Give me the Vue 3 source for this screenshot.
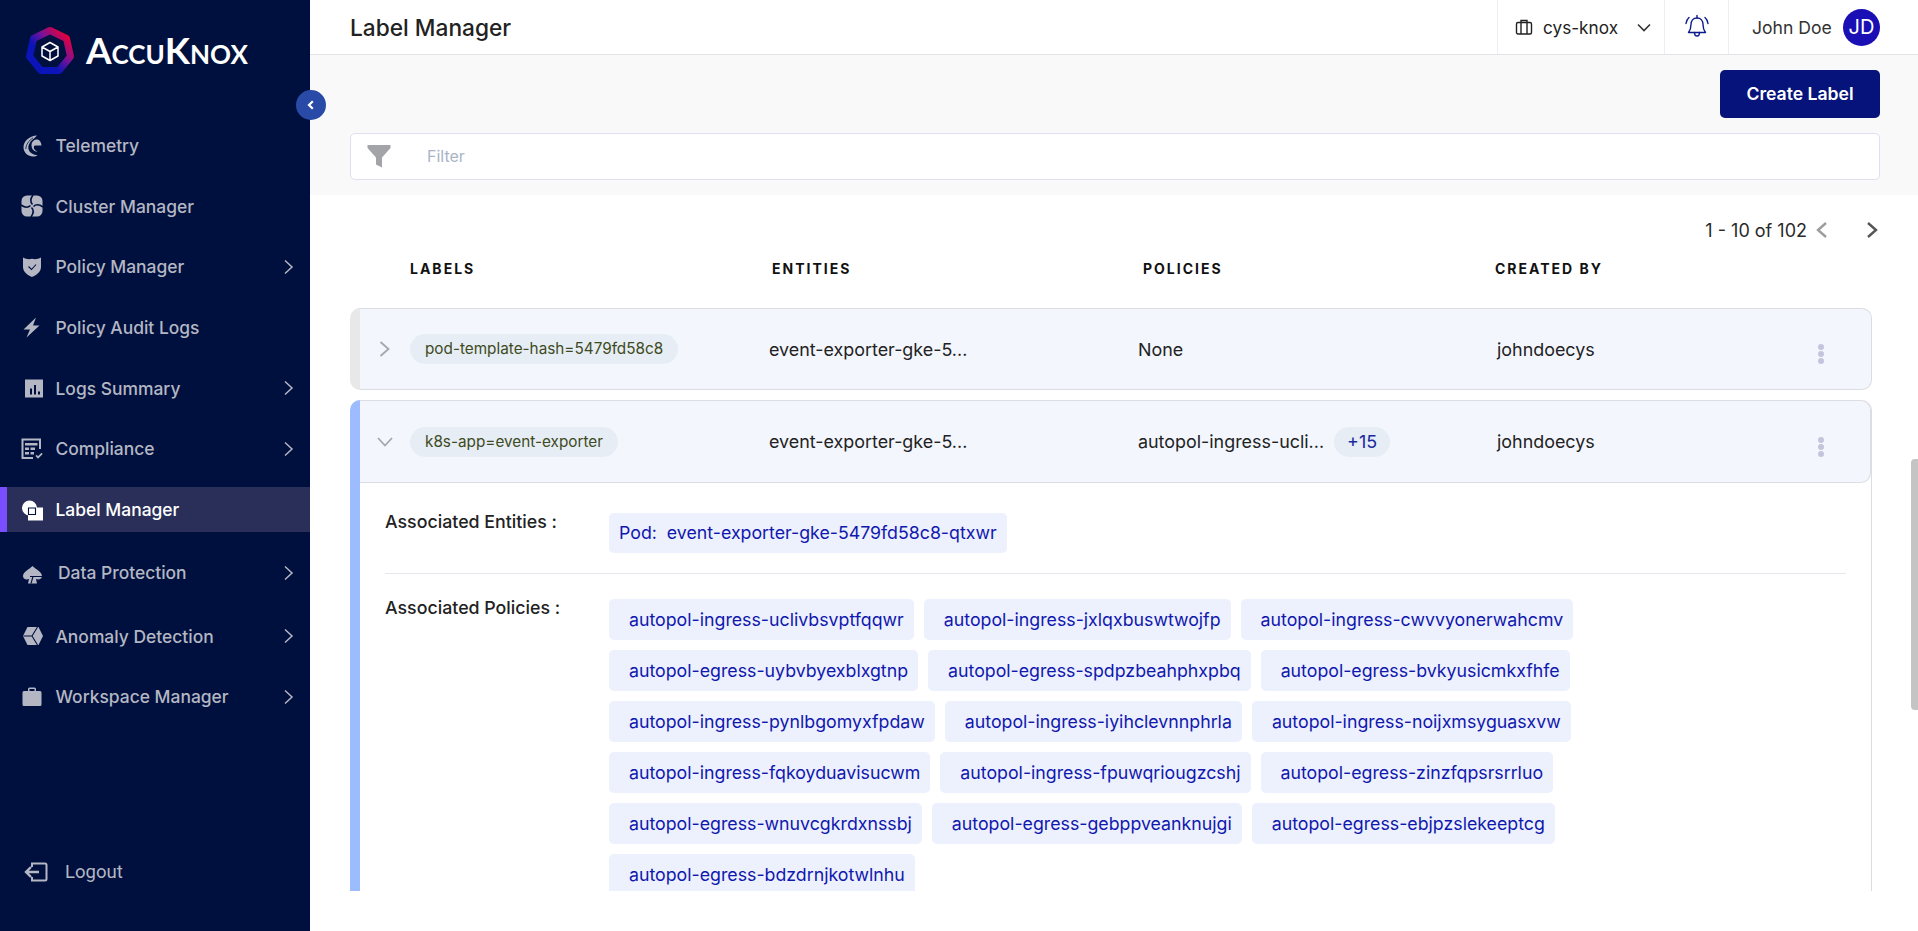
<template>
  <div class="app">
    <!-- Sidebar -->
    <aside class="sidebar">
      <div class="brand">
        <svg class="brand-mark" width="50" height="50" viewBox="0 0 50 50">
          <defs>
            <linearGradient id="ring" x1="0.1" y1="0.85" x2="0.9" y2="0.1">
              <stop offset="0.3" stop-color="#0a14b8" />
              <stop offset="0.62" stop-color="#7a1296" />
              <stop offset="1" stop-color="#e4003a" />
            </linearGradient>
          </defs>
          <path d="M25 4.500L41.500 12.500L45.500 30.500L34 44.500H16L4.500 30.500L8.500 12.500Z" fill="none" stroke="url(#ring)" stroke-width="7" stroke-linejoin="round" />
          <path d="M25 16.500L33 21V30L25 34.500L17 30V21Z M17 21L25 25.500L33 21 M25 25.500V34.500" fill="none" stroke="#fff" stroke-width="1.500" stroke-linejoin="round" />
        </svg>
        <span class="brand-name">AccuKnox</span>
      </div>
      <button class="collapse-btn">
        <svg width="12" height="12" viewBox="0 0 12 12"><path d="M7.800 2.200L4 6l3.800 3.800" fill="none" stroke="#fff" stroke-width="2.200" /></svg>
      </button>

      <nav class="nav">
        <div
          v-for="item in navItems"
          :key="item.label"
          class="nav-item"
          :class="{ active: item.active, wide: item.wide, shifted: item.shifted }"
        >
          <svg class="nav-icon" width="24" height="24" viewBox="0 0 24 24">
            <path v-for="d in icons[item.icon].fill" :key="d" :d="d" fill="currentColor" fill-rule="evenodd" />
            <path v-if="icons[item.icon].cut" :d="icons[item.icon].cut" fill="none" stroke="#00103e" :stroke-width="icons[item.icon].cutWidth || 1.1" />
          </svg>
          <span class="nav-label">{{ item.label }}</span>
          <svg v-if="item.arrow" class="nav-arrow" width="10" height="16" viewBox="0 0 10 16"><path d="M1 1.500l7 6.500-7 6.500" fill="none" stroke="currentColor" stroke-width="1.500" /></svg>
        </div>
      </nav>

      <div class="logout">
        <svg width="27" height="24" viewBox="0 0 27 24" fill="none" stroke="currentColor" stroke-width="2">
          <path d="M11 7V3.500h13a1.500 1.500 0 0 1 1.500 1.500v14a1.500 1.500 0 0 1-1.500 1.500H11V17" />
          <path d="M18 12H5M10 7l-5 5 5 5" stroke-width="2.400" />
        </svg>
        <span>Logout</span>
      </div>
    </aside>

    <!-- Main -->
    <main class="main">
      <header class="topbar">
        <h1 class="title">Label Manager</h1>
        <div class="top-actions">
          <div class="top-box workspace">
            <svg width="18" height="18" viewBox="0 0 18 18" fill="none" stroke="#222" stroke-width="1.400">
              <rect x="1.500" y="4.500" width="15" height="11.500" rx="1.500" />
              <path d="M6 16V2.500h6V16" />
            </svg>
            <span class="workspace-name">cys-knox</span>
            <svg width="14" height="9" viewBox="0 0 14 9"><path d="M1 1.500l6 6 6-6" fill="none" stroke="#333" stroke-width="1.600" /></svg>
          </div>
          <div class="top-box bell">
            <svg width="26" height="26" viewBox="0 0 26 26" fill="none" stroke="#0c1c8c" stroke-width="1.400" stroke-linecap="round" stroke-linejoin="round">
              <path d="M13 4c-4 0-6 3-6 6.500 0 4-1 6-2.500 8h17c-1.500-2-2.500-4-2.500-8C19 7 17 4 13 4z" />
              <path d="M10.500 18.500c0 2 1 3.500 2.500 3.500s2.500-1.500 2.500-3.500M13 1.500V4M5 3.500C3.300 5 2.300 7 2 9.500M21 3.500c1.700 1.500 2.700 3.500 3 6" />
            </svg>
          </div>
          <div class="top-box user">
            <span class="user-name">John Doe</span>
            <span class="avatar">JD</span>
          </div>
        </div>
      </header>

      <section class="toolbar">
        <button class="create-btn">Create Label</button>
        <div class="filter">
          <svg width="24" height="24" viewBox="0 0 24 24"><path d="M0.500 1H23.500V4L15 13.500V23.500L9 20.500V13.500L0.500 4Z" fill="#a3a4a7" /></svg>
          <span class="filter-text">Filter</span>
        </div>
      </section>

      <section class="list">
        <div class="pagination">
          <span>1 - 10 of 102</span>
          <svg width="12" height="18" viewBox="0 0 12 18"><path d="M10 2L2 9l8 7" fill="none" stroke="#9c9c9c" stroke-width="2.400" /></svg>
          <svg width="12" height="18" viewBox="0 0 12 18"><path d="M2 2l8 7-8 7" fill="none" stroke="#555" stroke-width="2.400" /></svg>
        </div>

        <div class="col-heads">
          <span class="h-label">LABELS</span>
          <span class="h-entity">ENTITIES</span>
          <span class="h-policy">POLICIES</span>
          <span>CREATED BY</span>
        </div>

        <div class="row closed">
          <svg class="chev" width="14" height="20" viewBox="0 0 14 20"><path d="M2.500 3l8 7-8 7" fill="none" stroke="#a4a7ae" stroke-width="1.800" /></svg>
          <div class="c-label"><span class="pill">pod-template-hash=5479fd58c8</span></div>
          <div class="c-entity">event-exporter-gke-5...</div>
          <div class="c-policy">None</div>
          <div class="c-owner">johndoecys</div>
          <div class="kebab"><i></i><i></i><i></i></div>
        </div>

        <div class="open-wrap">
          <div class="row opened">
            <svg class="chev" width="18" height="20" viewBox="0 0 18 20"><path d="M2 6l7 7.500L16 6" fill="none" stroke="#a4a7ae" stroke-width="1.800" /></svg>
            <div class="c-label"><span class="pill">k8s-app=event-exporter</span></div>
            <div class="c-entity">event-exporter-gke-5...</div>
            <div class="c-policy">
              <span>autopol-ingress-ucli...</span>
              <span class="more">+15</span>
            </div>
            <div class="c-owner">johndoecys</div>
            <div class="kebab"><i></i><i></i><i></i></div>
          </div>

          <div class="details">
            <div class="detail-row entities">
              <div class="detail-label">Associated Entities :</div>
              <div class="chips">
                <span class="chip entity">Pod:&nbsp; event-exporter-gke-5479fd58c8-qtxwr</span>
              </div>
            </div>
            <div class="detail-row policies">
              <div class="detail-label">Associated Policies :</div>
              <div class="chips">
                <span v-for="p in policies" :key="p" class="chip">{{ p }}</span>
              </div>
            </div>
          </div>
        </div>
      </section>
    </main>

    <div class="scroll-thumb"></div>
  </div>
</template>

<script setup>
const navItems = [
  { label: 'Telemetry', icon: 'telemetry' },
  { label: 'Cluster Manager', icon: 'cluster' },
  { label: 'Policy Manager', icon: 'shield', arrow: true },
  { label: 'Policy Audit Logs', icon: 'bolt' },
  { label: 'Logs Summary', icon: 'logs', arrow: true },
  { label: 'Compliance', icon: 'compliance', arrow: true },
  { label: 'Label Manager', icon: 'label', active: true, wide: true },
  { label: 'Data Protection', icon: 'spade', arrow: true, wide: true, shifted: true },
  { label: 'Anomaly Detection', icon: 'hex', arrow: true },
  { label: 'Workspace Manager', icon: 'case', arrow: true },
]

const icons = {
  telemetry: {
    fill: [
      'M17 1.500C10 2 3.500 6.500 3.500 13.500C3.500 18.500 8 22.500 13 22.500C15 22.500 16.500 22 17.500 21C14 21 9.500 19 8.500 15C7.800 11.500 10 7 14 4.500C15 3.800 16 2.500 17 1.500Z',
      'M11.500 11C11.500 7.500 14.500 5.500 17 5.500C19.500 5.500 21 8 21.500 11.500H15C14 11.500 13.500 13 14 14.500C14.800 16 16 17 17.500 17.500C14.500 18 11.500 15.500 11.500 11Z',
    ],
    cut: 'M5.800 15C6 10.500 9 6.500 13 3.800',
    cutWidth: 0.8,
  },
  cluster: {
    fill: ['M1.500 7A5.500 5.500 0 0 1 7 1.500H17A5.500 5.500 0 0 1 22.500 7V17A5.500 5.500 0 0 1 17 22.500H7A5.500 5.500 0 0 1 1.500 17Z'],
    cut: 'M12.500 10.500C10 8 10.500 4.500 13 1M13.500 12.500C16 10 19.500 10.500 23 13M11.500 13.500C14 16 13.500 19.500 11 23M10.500 11.500C8 14 4.500 13.500 1 11',
    cutWidth: 1.6,
  },
  shield: {
    fill: ['M3 2.500C6 4.200 9 4.500 12 3.800C15 4.500 18 4.200 21 2.500V12C21 17 16 20.500 12 22C8 20.500 3 17 3 12Z'],
    cut: 'M8.500 11.500l3 3 4.500-5',
  },
  bolt: {
    fill: ['M16 1.500L3.500 13.500H10L6.500 21.500L19.500 9.500H13Z'],
  },
  logs: {
    fill: ['M5 3.500H23V21.500H5Z M10 12.500H12V18.500H10Z M14 9H16V18.500H14Z M18 15.500H20V18.500H18Z'],
  },
  compliance: {
    fill: [
      'M1.500 1.500H21V12H19V3.500H3.500V20H13V22H1.500Z',
      'M5 6H17.500V8.500H5Z M5 10.500H9V13H5Z M10.500 10.500H15V13H10.500Z M5 15H9V17.500H5Z M10.500 15H14V17.500H10.500Z',
      'M15.500 19L16.700 17.800L18 19.200L21.500 15.700L22.700 17L18 21.700Z',
    ],
  },
  label: {
    fill: [
      'M2 10a7.500 7.500 0 1 1 15 0a7.500 7.500 0 1 1-15 0Z',
      'M8 9.500H23V22.500H8Z',
    ],
    cut: 'M8.500 10h7v6.500h-7z',
  },
  spade: {
    fill: ['M12.500 5C15 8 22 10.500 22 15C22 18 19 19 16 18L17 22.500H8L9 18C6 19 3 18 3 15C3 10.500 10 8 12.500 5Z'],
    cut: 'M10 15.500H22M13 15.500L11 22.500',
  },
  hex: {
    fill: ['M7.500 3H18.500L23 12L18.500 21H7.500L3 12Z'],
    cut: 'M3.500 12H12L17.500 3M12 12L17.500 21',
  },
  case: {
    fill: ['M2.500 7.500A1.500 1.500 0 0 1 4 6H8V4A1.500 1.500 0 0 1 9.500 2.500H14.500A1.500 1.500 0 0 1 16 4V6H20A1.500 1.500 0 0 1 21.500 7.500V19.500A1.500 1.500 0 0 1 20 21H4A1.500 1.500 0 0 1 2.500 19.500Z M9.500 4V6H14.500V4Z'],
  },
}

const policies = [
  'autopol-ingress-uclivbsvptfqqwr',
  'autopol-ingress-jxlqxbuswtwojfp',
  'autopol-ingress-cwvvyonerwahcmv',
  'autopol-egress-uybvbyexblxgtnp',
  'autopol-egress-spdpzbeahphxpbq',
  'autopol-egress-bvkyusicmkxfhfe',
  'autopol-ingress-pynlbgomyxfpdaw',
  'autopol-ingress-iyihclevnnphrla',
  'autopol-ingress-noijxmsyguasxvw',
  'autopol-ingress-fqkoyduavisucwm',
  'autopol-ingress-fpuwqriougzcshj',
  'autopol-egress-zinzfqpsrsrrluo',
  'autopol-egress-wnuvcgkrdxnssbj',
  'autopol-egress-gebppveanknujgi',
  'autopol-egress-ebjpzslekeeptcg',
  'autopol-egress-bdzdrnjkotwlnhu',
]
</script>

<style>
html, body {
  margin: 0;
  height: 100%;
  overflow: hidden;
  background: #fff;
}
</style>

<style scoped>
.app {
  position: relative;
  display: flex;
  height: 931px;
  font-family: Inter, "Liberation Sans", sans-serif;
  color: #222;
  overflow: hidden;
}

/* sidebar */
.sidebar {
  position: relative;
  width: 310px;
  flex-shrink: 0;
  display: flex;
  flex-direction: column;
  background: #00103e;
  color: #b4b7c3;
  font-size: 17.45px;
}

.brand {
  height: 123px;
  display: flex;
  align-items: flex-start;
  padding: 26px 0 0 25px;
  box-sizing: border-box;
}

.brand-name {
  margin: 1px 0 0 11px;
  font-family: Lato, sans-serif;
  font-size: 36.8px;
  line-height: 46px;
  font-weight: 700;
  font-variant: small-caps;
  color: #fff;
}

.collapse-btn {
  position: absolute;
  top: 90px;
  left: 296px;
  width: 30px;
  height: 30px;
  padding: 0;
  border: none;
  border-radius: 50%;
  background: #2a4aa8;
  display: flex;
  align-items: center;
  justify-content: center;
  z-index: 3;
}

.nav-item {
  height: 45px;
  margin-bottom: 15.7px;
  padding: 0 16px 0 20px;
  display: flex;
  align-items: center;
  gap: 11.5px;
  box-sizing: border-box;
  font-weight: 500;
}

.nav-item.wide {
  margin-bottom: 18.3px;
}

.nav-item.shifted {
  gap: 14px;
}

.nav-item.active {
  background: #2a2f59;
  color: #fff;
  box-shadow: inset 7px 0 0 #7a4dff;
}

.nav-arrow {
  margin-left: auto;
}

.logout {
  margin-top: auto;
  height: 45px;
  margin-bottom: 37px;
  padding-left: 21px;
  display: flex;
  align-items: center;
  gap: 17px;
  font-family: Roboto, sans-serif;
  font-size: 18.5px;
}

/* main */
.main {
  flex: 1;
  min-width: 0;
  display: flex;
  flex-direction: column;
  height: 931px;
}

.topbar {
  height: 55px;
  flex-shrink: 0;
  box-sizing: border-box;
  padding: 0 38px 0 40px;
  display: flex;
  align-items: center;
  justify-content: space-between;
  border-bottom: 1px solid #e4e4e8;
}

.title {
  margin: 0;
  font-size: 22.7px;
  font-weight: 500;
  color: #222;
}

.top-actions {
  display: flex;
  height: 54px;
}

.top-box {
  display: flex;
  align-items: center;
  box-sizing: border-box;
  border-left: 1px solid #eeeef2;
}

.workspace {
  width: 167px;
  padding-left: 17px;
  font-size: 16px;
}

.workspace-name {
  margin: 0 19px 0 10px;
  font-size: 17.2px;
}

.bell {
  width: 64px;
  justify-content: center;
}

.user {
  width: 152px;
  padding-left: 23px;
  justify-content: space-between;
  font-size: 17.6px;
  color: #333;
}

.user-name {
  white-space: nowrap;
}

.avatar {
  width: 37px;
  height: 37px;
  border-radius: 50%;
  background: #1a0fb5;
  color: #fff;
  font-size: 20px;
  display: flex;
  align-items: center;
  justify-content: center;
}

.toolbar {
  height: 140px;
  flex-shrink: 0;
  box-sizing: border-box;
  padding: 15px 38px 0 40px;
  background: #f9f9fa;
  display: flex;
  flex-direction: column;
}

.create-btn {
  align-self: flex-end;
  width: 160px;
  height: 48px;
  padding: 0 0 2px;
  border: none;
  border-radius: 5px;
  background: #06137a;
  color: #fff;
  font-family: inherit;
  font-size: 17.6px;
  font-weight: 600;
}

.filter {
  margin-top: 15px;
  height: 47px;
  box-sizing: border-box;
  border: 1px solid #dfe0f0;
  border-radius: 5px;
  background: #fff;
  display: flex;
  align-items: center;
  padding: 0 0 1px 16px;
}

.filter-text {
  margin-left: 36px;
  font-size: 16px;
  color: #aab4c8;
}

.list {
  height: 696px;
  flex-shrink: 0;
  overflow: hidden;
  box-sizing: border-box;
  padding: 20px 46px 0 40px;
}

.pagination {
  height: 30px;
  margin-right: -6px;
  display: flex;
  align-items: center;
  justify-content: flex-end;
  font-size: 18px;
  color: #2a2a2a;
}

.pagination svg:first-of-type {
  margin: 0 38px 0 9px;
}

.col-heads {
  height: 30px;
  margin-top: 8px;
  margin-bottom: 25px;
  padding-left: 60px;
  display: flex;
  align-items: center;
  font-size: 14px;
  font-weight: 700;
  letter-spacing: 2px;
  color: #111;
}

.h-label {
  width: 362px;
}

.h-entity {
  width: 371px;
}

.h-policy {
  width: 352px;
}

.row {
  display: flex;
  align-items: center;
  box-sizing: border-box;
  background: #f4f6fe;
  border: 1px solid #dcdde2;
  font-size: 17.9px;
  color: #222;
}

.row.closed {
  height: 82px;
  border-left: 10px solid #e8e8e8;
  border-radius: 10px;
  margin-bottom: 10px;
}

.row.opened {
  height: 83px;
  border-left: none;
  border-radius: 0 10px 10px 0;
}

.open-wrap {
  border-left: 10px solid #9dbcfd;
  border-right: 1px solid #dcdde2;
  border-radius: 10px 10px 0 0;
}

.chev {
  margin: 0 18px 0 18px;
  flex-shrink: 0;
}

.opened .chev {
  margin: 0 16px;
}

.c-label {
  width: 359px;
  flex-shrink: 0;
}

.c-entity {
  width: 369px;
  flex-shrink: 0;
}

.c-policy {
  width: 359px;
  flex-shrink: 0;
  display: flex;
  align-items: center;
  gap: 10px;
}

.c-owner {
  width: 299px;
  flex-shrink: 0;
}

.pill {
  display: inline-block;
  height: 30px;
  line-height: 30px;
  padding: 0 15px;
  border-radius: 15px;
  background: #e6edf5;
  color: #3e4a22;
  font-size: 15.3px;
}

.more {
  height: 30px;
  line-height: 30px;
  padding: 0 13px;
  border-radius: 15px;
  background: #e6edf5;
  color: #1a2a9c;
}

.kebab {
  margin: 10px 0 0 22px;
  display: flex;
  flex-direction: column;
  gap: 1px;
}

.kebab i {
  width: 6px;
  height: 6px;
  border-radius: 50%;
  background: #c2c5dc;
}

.details {
  padding: 30px 25px 0 25px;
}

.detail-row {
  display: flex;
}

.detail-row.entities {
  padding-bottom: 20px;
  border-bottom: 1px solid #e6e6ec;
  margin-bottom: 25px;
}

.detail-label {
  width: 224px;
  flex-shrink: 0;
  font-size: 17.8px;
  font-weight: 500;
  line-height: 18px;
  color: #222;
}

.chips {
  width: 980px;
  display: flex;
  flex-wrap: wrap;
  gap: 10px;
}

.chip {
  height: 41px;
  line-height: 41px;
  padding: 0 10px 0 20px;
  border-radius: 5px;
  background: #edf0fd;
  color: #1018ae;
  font-size: 17.75px;
  white-space: nowrap;
}

.chip.entity {
  height: 40px;
  line-height: 40px;
  padding: 0 10px;
}

.scroll-thumb {
  position: absolute;
  top: 459px;
  right: 0;
  width: 7px;
  height: 251px;
  border-radius: 4px 0 0 4px;
  background: #c4c4c4;
}
</style>
